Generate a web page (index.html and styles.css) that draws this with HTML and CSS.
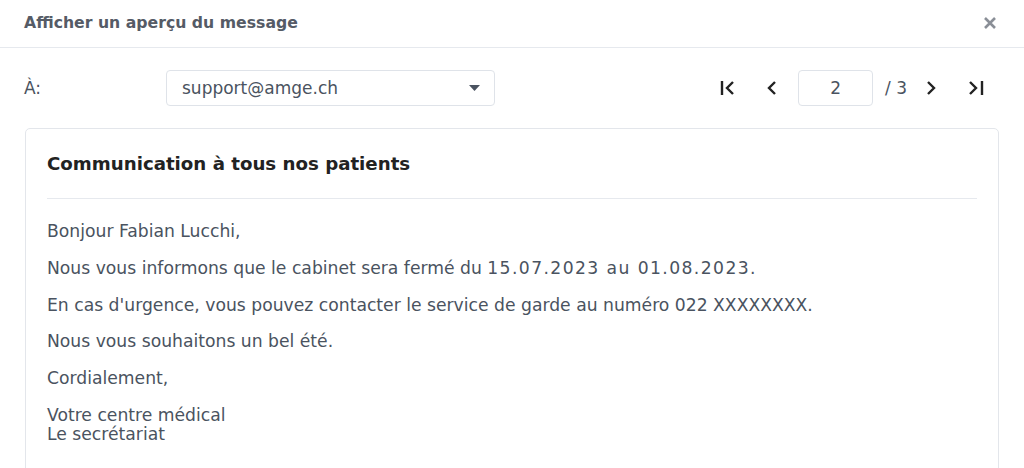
FILE: index.html
```html
<!DOCTYPE html>
<html lang="fr">
<head>
<meta charset="utf-8">
<title>Afficher un aperçu du message</title>
<link rel="stylesheet" href="styles.css">
</head>
<body>
<div class="dialog">
  <header class="dlg-head">
    <h1 class="dlg-title">Afficher un aperçu du message</h1>
    <button class="close" aria-label="Fermer">
      <svg width="14" height="14" viewBox="0 0 14 14"><path d="M2 2 L12 12 M12 2 L2 12" stroke="#8a8f97" stroke-width="2.6" stroke-linecap="butt"/></svg>
    </button>
  </header>
  <div class="toolbar">
    <label class="to-label">À:</label>
    <div class="select">
      <span class="select-val">support@amge.ch</span>
      <svg class="caret" width="11" height="6" viewBox="0 0 11 6"><path d="M0 0 H11 L5.5 6 Z" fill="#4a5360"/></svg>
    </div>
    <div class="pager">
      <button class="pg-btn first" aria-label="Premier">
        <svg width="24" height="18" viewBox="0 0 24 18"><path d="M5 2 V16" stroke="#222" stroke-width="2.4"/><path d="M16 3 L10 9 L16 15" stroke="#222" stroke-width="2.4" fill="none"/></svg>
      </button>
      <button class="pg-btn prev" aria-label="Précédent">
        <svg width="24" height="18" viewBox="0 0 24 18"><path d="M15 3 L9 9 L15 15" stroke="#222" stroke-width="2.4" fill="none"/></svg>
      </button>
      <div class="pg-input">2</div>
      <span class="pg-total">/ 3</span>
      <button class="pg-btn next" aria-label="Suivant">
        <svg width="24" height="18" viewBox="0 0 24 18"><path d="M9 3 L15 9 L9 15" stroke="#222" stroke-width="2.4" fill="none"/></svg>
      </button>
      <button class="pg-btn last" aria-label="Dernier">
        <svg width="24" height="18" viewBox="0 0 24 18"><path d="M7 3 L13 9 L7 15" stroke="#222" stroke-width="2.4" fill="none"/><path d="M19 2 V16" stroke="#222" stroke-width="2.4"/></svg>
      </button>
    </div>
  </div>
  <div class="card">
    <h2 class="card-title">Communication à tous nos patients</h2>
    <div class="card-body">
      <p>Bonjour Fabian Lucchi,</p>
      <p>Nous vous informons que le cabinet sera fermé du <span class="dates">15.07.2023 au 01.08.2023.</span></p>
      <p>En cas d'urgence, vous pouvez contacter le service de garde au numéro 022 XXXXXXXX.</p>
      <p>Nous vous souhaitons un bel été.</p>
      <p>Cordialement,</p>
      <p>Votre centre médical<br>Le secrétariat</p>
    </div>
  </div>
</div>
</body>
</html>
```
FILE: styles.css
```css
* { box-sizing: border-box; }
html, body { margin: 0; padding: 0; background: #fff; }
body {
  font-family: "DejaVu Sans", Verdana, sans-serif;
  color: #4a5360;
  width: 1024px;
  height: 468px;
  overflow: hidden;
}
.dialog { display: flex; flex-direction: column; }
.dlg-head {
  height: 48px;
  display: flex;
  align-items: center;
  justify-content: space-between;
  padding: 0 27px 2px 24px;
  border-bottom: 1px solid #e6e9ee;
}
.dlg-title {
  margin: 0;
  font-size: 15.7px;
  font-weight: bold;
  color: #555b66;
}
.close {
  border: 0;
  background: none;
  padding: 0;
  display: flex;
  width: 14px;
  height: 14px;
}
.toolbar {
  display: flex;
  align-items: center;
  height: 80px;
  padding: 0 24px;
}
.to-label {
  width: 142px;
  font-size: 17px;
  color: #4a5360;
}
.select {
  width: 329px;
  height: 36px;
  border: 1px solid #dfe3e9;
  border-radius: 4px;
  display: flex;
  align-items: center;
  justify-content: space-between;
  padding: 0 14px 0 15px;
  font-size: 17px;
  color: #4a5360;
}
.pager {
  margin-left: auto;
  margin-right: 13px;
  display: flex;
  align-items: center;
}
.pg-btn {
  border: 0;
  background: none;
  padding: 0;
  width: 24px;
  height: 36px;
  display: flex;
  align-items: center;
  justify-content: center;
}
.pg-btn.prev { margin-left: 19px; }
.pg-input {
  width: 75px;
  height: 36px;
  border: 1px solid #dfe3e9;
  border-radius: 4px;
  display: flex;
  align-items: center;
  justify-content: center;
  font-size: 17px;
  color: #4a5360;
  margin-left: 14px;
}
.pg-total {
  font-size: 17px;
  color: #4a5360;
  margin: 0 12px 0 12px;
}
.pg-btn.last { margin-left: 20px; }
.card {
  margin: 0 25px 0 25px;
  border: 1px solid #e3e6eb;
  border-radius: 5px;
  padding: 0 21px;
  height: 400px;
}
.card-title {
  margin: 0;
  height: 70px;
  display: flex;
  align-items: center;
  font-size: 18.2px;
  font-weight: bold;
  color: #222;
  border-bottom: 1px solid #e6e9ee;
}
.card-body { padding-top: 23px; }
.card-body p {
  margin: 0 0 17.8px;
  font-size: 17.2px;
  line-height: 19px;
  color: #4a5360;
}
.dates { letter-spacing: 1.4px; }
```
